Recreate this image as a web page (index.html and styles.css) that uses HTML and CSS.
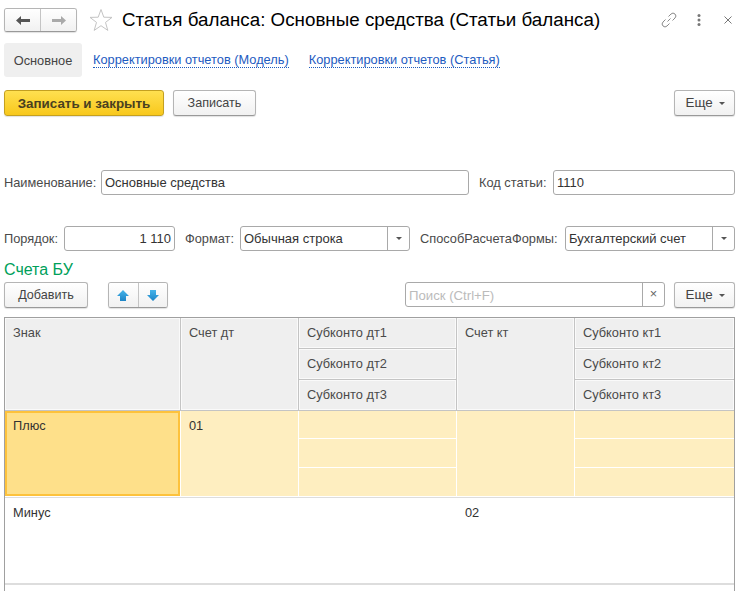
FILE: index.html
```html
<!DOCTYPE html>
<html lang="en">
<head>
  <meta charset="UTF-8" />
  <title>Статья баланса</title>
  <link rel="stylesheet" href="styles.css">
</head>
<body>

  <div class="title-bar">
    <div class="nav-group">
      <button class="nav-btn">
        <svg width="14" height="9" viewBox="0 0 14 9"><path d="M0 4.5 L5 0 V3 H14 V6 H5 V9 Z" fill="#555"/></svg>
      </button>
      <button class="nav-btn">
        <svg width="14" height="9" viewBox="0 0 14 9"><path d="M14 4.5 L9 0 V3 H0 V6 H9 V9 Z" fill="#aaa"/></svg>
      </button>
    </div>
    <svg class="star" width="24" height="24" viewBox="0 0 24 24"><path d="M12 1.5 L14.8 9.2 L23 9.4 L16.5 14.4 L18.8 22.4 L12 17.7 L5.2 22.4 L7.5 14.4 L1 9.4 L9.2 9.2 Z" fill="#fff" stroke="#c4c4c4"/></svg>
    <h1>Статья баланса: Основные средства (Статьи баланса)</h1>
    <div class="window-icons">
      <svg class="icon-link" width="16" height="16" viewBox="0 0 16 16" fill="none" stroke="#8a8a8a"><path d="M6.5 9.5 L9.5 6.5"/><path d="M7.5 4.5 L10 2 A2.6 2.6 0 0 1 14 6 L11.5 8.5"/><path d="M8.5 11.5 L6 14 A2.6 2.6 0 0 1 2 10 L4.5 7.5"/></svg>
      <svg class="icon-dots" width="4" height="12" viewBox="0 0 4 12" fill="#777"><circle cx="2" cy="1.5" r="1.5"/><circle cx="2" cy="6" r="1.5"/><circle cx="2" cy="10.5" r="1.5"/></svg>
      <svg class="icon-close" width="8" height="8" viewBox="0 0 8 8" stroke="#777" fill="none"><path d="M0.5 0.5 L7.5 7.5 M7.5 0.5 L0.5 7.5"/></svg>
    </div>
  </div>

  <div class="tabs">
    <span class="tab-active">Основное</span>
    <a class="tab-link">Корректировки отчетов (Модель)</a>
    <a class="tab-link">Корректировки отчетов (Статья)</a>
  </div>

  <div class="command-bar">
    <button class="btn btn-primary">Записать и закрыть</button>
    <button class="btn btn-save">Записать</button>
    <button class="btn btn-more">Еще <i class="caret"></i></button>
  </div>

  <div class="form-row row-name">
    <label>Наименование:</label>
    <div class="field">Основные средства</div>
    <label>Код статьи:</label>
    <div class="field">1110</div>
  </div>

  <div class="form-row row-order">
    <label>Порядок:</label>
    <div class="field field-number">1 110</div>
    <label>Формат:</label>
    <div class="field field-select">Обычная строка<span class="select-arrow"><i class="caret"></i></span></div>
    <label>СпособРасчетаФормы:</label>
    <div class="field field-select">Бухгалтерский счет<span class="select-arrow"><i class="caret"></i></span></div>
  </div>

  <h2>Счета БУ</h2>

  <div class="table-bar">
    <button class="btn btn-add">Добавить</button>
    <div class="nav-group arrows">
      <button class="nav-btn">
        <svg width="12" height="11" viewBox="0 0 12 11"><defs><linearGradient id="arrowBlue" x1="0" y1="0" x2="0" y2="1"><stop offset="0" stop-color="#45b4ea"/><stop offset="1" stop-color="#1d84c6"/></linearGradient></defs><path d="M6 0 L12 6 H9 V11 H3 V6 H0 Z" fill="url(#arrowBlue)"/></svg>
      </button>
      <button class="nav-btn">
        <svg width="12" height="11" viewBox="0 0 12 11"><path d="M6 11 L12 5 H9 V0 H3 V5 H0 Z" fill="url(#arrowBlue)"/></svg>
      </button>
    </div>
    <div class="search">
      <span class="search-text">Поиск (Ctrl+F)</span>
      <span class="search-clear">×</span>
    </div>
    <button class="btn btn-more">Еще <i class="caret"></i></button>
  </div>

  <table class="accounts">
    <colgroup>
      <col class="col-sign"><col class="col-dt"><col class="col-sub"><col class="col-kt"><col class="col-subkt">
    </colgroup>
    <thead>
      <tr>
        <th rowspan="3">Знак</th>
        <th rowspan="3">Счет дт</th>
        <th>Субконто дт1</th>
        <th rowspan="3">Счет кт</th>
        <th>Субконто кт1</th>
      </tr>
      <tr><th>Субконто дт2</th><th>Субконто кт2</th></tr>
      <tr><th>Субконто дт3</th><th>Субконто кт3</th></tr>
    </thead>
    <tbody>
      <tr class="selected">
        <td rowspan="3" class="current">Плюс</td>
        <td rowspan="3">01</td>
        <td></td>
        <td rowspan="3"></td>
        <td></td>
      </tr>
      <tr class="selected sub-high"><td></td><td></td></tr>
      <tr class="selected sub-high"><td></td><td></td></tr>
      <tr class="plain">
        <td>Минус</td>
        <td></td>
        <td></td>
        <td>02</td>
        <td></td>
      </tr>
      <tr class="filler"><td colspan="5"></td></tr>
    </tbody>
  </table>

</body>
</html>
```

FILE: styles.css
```css
body {
  font-family: "Liberation Sans", Arial, sans-serif;
  font-size: 12.8px;
  color: #4a4a4a;
  margin: 0;
  padding: 8px 5px 0 4px;
  height: 583px;
  overflow: hidden;
  background: #ffffff;
}

button {
  font-family: inherit;
  font-size: 12.6px;
  padding: 0;
}

/* title */
.title-bar {
  display: flex;
  align-items: center;
  height: 24px;
}

.nav-group {
  display: flex;
  width: 73px;
  height: 24px;
  box-sizing: border-box;
  border: 1px solid #b5b5b5;
  border-bottom-color: #999;
  border-radius: 3px;
  overflow: hidden;
  box-shadow: 0 1px 1px rgba(0, 0, 0, 0.12);
}

.nav-btn {
  flex: 1;
  display: flex;
  align-items: center;
  justify-content: center;
  border: none;
  background: linear-gradient(to bottom, #ffffff, #f1f1f1);
}

.nav-btn + .nav-btn {
  border-left: 1px solid #c4c4c4;
}

.star {
  margin-left: 12px;
  flex: none;
}

h1 {
  font-size: 18.8px;
  font-weight: normal;
  color: #000;
  margin: 0 0 0 9px;
  white-space: nowrap;
}

.window-icons {
  margin-left: auto;
  display: flex;
  align-items: center;
  padding-right: 3px;
}

.icon-dots {
  margin-left: 20px;
}

.icon-close {
  margin-left: 23px;
}

/* tabs */
.tabs {
  display: flex;
  align-items: center;
  margin-top: 11px;
  height: 34px;
}

.tab-active {
  display: flex;
  align-items: center;
  justify-content: center;
  width: 78px;
  height: 34px;
  background-color: #efefef;
  border-radius: 3px;
  color: #444;
}

.tab-link {
  color: #1d5bbf;
  margin-left: 11px;
  margin-right: 9px;
  border-bottom: 1px dotted #1d5bbf;
  line-height: 14px;
  margin-top: 1px;
}

/* command bar */
.command-bar {
  display: flex;
  margin-top: 13px;
  height: 26px;
}

.btn {
  height: 26px;
  box-sizing: border-box;
  border: 1px solid #b5b5b5;
  border-bottom-color: #999;
  border-radius: 3px;
  background: linear-gradient(to bottom, #ffffff, #f1f1f1);
  box-shadow: 0 1px 1px rgba(0, 0, 0, 0.12);
  color: #444;
}

.btn-primary {
  width: 160px;
  font-size: 13.4px;
  background: linear-gradient(to bottom, #ffe050, #f8c81c);
  border-color: #c4a020;
  font-weight: bold;
  color: #4a4020;
}

.btn-save {
  width: 83px;
  margin-left: 9px;
}

.btn-more {
  width: 61px;
  margin-left: auto;
  font-size: 13.4px;
  padding: 0 0 2px 2px;
}

.caret {
  display: inline-block;
  width: 0;
  height: 0;
  margin-left: 3px;
  vertical-align: 2px;
  border-left: 3px solid transparent;
  border-right: 3px solid transparent;
  border-top: 3px solid #555;
}

/* form */
.form-row {
  display: grid;
  align-items: center;
  height: 25px;
}

.row-name {
  margin-top: 54px;
  grid-template-columns: 97px 368px 84px 182px;
}

.row-order {
  margin-top: 31px;
  grid-template-columns: 60px 111px 65px 170px 155px 170px;
}

.form-row label {
  white-space: nowrap;
  color: #4a4a4a;
}

.form-row label:not(:first-child) {
  padding-left: 10px;
}

.field {
  font-size: 13px;
  height: 25px;
  box-sizing: border-box;
  border: 1px solid #a9a9a9;
  border-radius: 3px;
  padding: 0 3px;
  line-height: 23px;
  color: #333;
  background: #fff;
  white-space: nowrap;
}

.field-number {
  text-align: right;
}

.field-select {
  position: relative;
}

.select-arrow {
  position: absolute;
  top: 0;
  right: 0;
  bottom: 0;
  width: 21px;
  border-left: 1px solid #a9a9a9;
  display: flex;
  align-items: center;
  justify-content: center;
}

.select-arrow .caret {
  margin-left: 0;
}

h2 {
  font-size: 16px;
  font-weight: normal;
  color: #00a05a;
  margin: 8px 0 0;
  line-height: 22px;
  height: 22px;
}

/* table toolbar */
.table-bar {
  display: flex;
  height: 26px;
  margin-top: 1px;
}

.btn-add {
  width: 84px;
}

.arrows {
  width: 60px;
  height: 26px;
  margin-left: 20px;
}

.search {
  display: flex;
  width: 260px;
  height: 25px;
  box-sizing: border-box;
  margin-left: 237px;
  border: 1px solid #a9a9a9;
  border-radius: 3px;
  line-height: 25px;
}

.search-text {
  flex: 1;
  font-size: 13.2px;
  padding-left: 3px;
  color: #bbb;
}

.search-clear {
  width: 21px;
  border-left: 1px solid #a9a9a9;
  text-align: center;
  line-height: 22px;
  color: #666;
}

.table-bar .btn-more {
  margin-left: 9px;
}

/* table */
.accounts {
  width: 731px;
  margin-top: 9px;
  table-layout: fixed;
  border-collapse: separate;
  border-spacing: 0;
  border-top: 1px solid #a0a0a0;
  border-left: 1px solid #a0a0a0;
  border-right: 1px solid #a0a0a0;
}

.col-sign { width: 176px; }
.col-dt { width: 118px; }
.col-sub { width: 158px; }
.col-kt { width: 118px; }

.accounts th {
  height: 31px;
  box-sizing: border-box;
  padding: 7px 8px 0;
  vertical-align: top;
  text-align: left;
  font-weight: normal;
  color: #4a4a4a;
  background-color: #efefef;
  border-right: 1px solid #c4c4c4;
  border-bottom: 1px solid #c4c4c4;
  box-shadow: inset -1px -1px 0 #fafafa, inset 1px 1px 0 #fafafa;
}

.accounts th:last-child,
.accounts td:last-child {
  border-right: none;
}

.accounts td {
  padding: 7px 8px 0;
  vertical-align: top;
  box-sizing: border-box;
  color: #333;
}

.selected td {
  height: 28px;
  background-color: #feeec0;
  border-right: 1px solid #ffffff;
  border-bottom: 1px solid #ffffff;
}

.sub-high td {
  height: 29px;
}

.selected td.current {
  background-color: #fee08a;
  box-shadow: inset 0 0 0 2px #fdc23c;
}

.plain td {
  height: 88px;
  border-top: 1px solid #dddddd;
  border-bottom: 2px solid #dddddd;
}

.filler td {
  height: 20px;
  padding: 0;
}
```
